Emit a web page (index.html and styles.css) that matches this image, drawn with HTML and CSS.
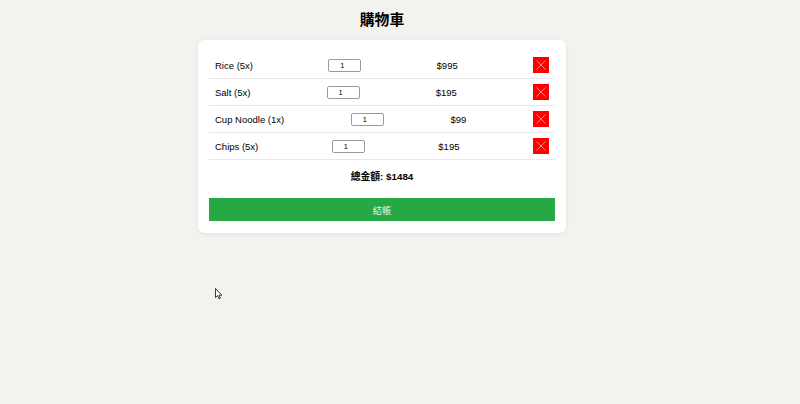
FILE: index.html
```html
<!DOCTYPE html>
<html lang="zh-Hant">
<head>
<meta charset="utf-8">
<title>購物車</title>
<link rel="stylesheet" href="styles.css">
</head>
<body>
<div class="page">
  <h1 class="title">購物車</h1>
  <div class="card">
    <div class="row">
      <span class="name">Rice (5x)</span>
      <input class="qty" type="text" value="1">
      <span class="price">$995</span>
      <button class="remove" aria-label="remove"><svg viewBox="0 0 16 16" width="16" height="16"><path d="M3.5 3.5 L12.5 12.5 M12.5 3.5 L3.5 12.5" stroke="#ff9a9a" stroke-width="0.9" fill="none"/></svg></button>
    </div>
    <div class="row">
      <span class="name">Salt (5x)</span>
      <input class="qty" type="text" value="1">
      <span class="price">$195</span>
      <button class="remove" aria-label="remove"><svg viewBox="0 0 16 16" width="16" height="16"><path d="M3.5 3.5 L12.5 12.5 M12.5 3.5 L3.5 12.5" stroke="#ff9a9a" stroke-width="0.9" fill="none"/></svg></button>
    </div>
    <div class="row">
      <span class="name">Cup Noodle (1x)</span>
      <input class="qty" type="text" value="1">
      <span class="price">$99</span>
      <button class="remove" aria-label="remove"><svg viewBox="0 0 16 16" width="16" height="16"><path d="M3.5 3.5 L12.5 12.5 M12.5 3.5 L3.5 12.5" stroke="#ff9a9a" stroke-width="0.9" fill="none"/></svg></button>
    </div>
    <div class="row">
      <span class="name">Chips (5x)</span>
      <input class="qty" type="text" value="1">
      <span class="price">$195</span>
      <button class="remove" aria-label="remove"><svg viewBox="0 0 16 16" width="16" height="16"><path d="M3.5 3.5 L12.5 12.5 M12.5 3.5 L3.5 12.5" stroke="#ff9a9a" stroke-width="0.9" fill="none"/></svg></button>
    </div>
    <div class="total">總金額: $1484</div>
    <button class="checkout">結帳</button>
  </div>
</div>
<svg class="cursor" viewBox="0 0 8 12" width="8" height="12"><path d="M0.5 0.5 L0.5 9.5 L2.6 7.6 L4 10.8 L5.3 10.2 L4 7.2 L6.8 7.2 Z" fill="#fff" stroke="#222" stroke-width="0.9" stroke-linejoin="round"/></svg>
</body>
</html>
```
FILE: styles.css
```css
html, body {
  margin: 0;
  padding: 0;
  background: #f2f2ef;
}
body {
  font-family: "Liberation Sans", Arial, "Noto Sans CJK TC", sans-serif;
  color: #111;
  position: relative;
  height: 404px;
  overflow: hidden;
}
.page {
  width: 764px;
  display: flex;
  flex-direction: column;
  align-items: center;
}
.title {
  margin: 0;
  height: 40px;
  line-height: 38px;
  font-size: 14.8px;
  font-weight: bold;
  font-family: "Noto Sans CJK TC", "Liberation Sans", sans-serif;
  color: #000;
}
.card {
  width: 346px;
  background: #fff;
  border-radius: 6px;
  padding: 12px 11px 12px;
  box-shadow: 0 1px 4px rgba(0,0,0,0.08);
}
.row {
  display: flex;
  justify-content: space-between;
  align-items: center;
  height: 26px;
  padding: 0 6px;
  border-bottom: 1px solid #e8e8e8;
  font-size: 9.5px;
}
.name, .price {
  color: #000;
}
.qty {
  box-sizing: border-box;
  width: 33px;
  height: 13px;
  margin: 0;
  padding: 0 0 0 11px;
  border: 1px solid #9a9a9a;
  border-radius: 2px;
  font-size: 7.5px;
  font-family: "Liberation Sans", Arial, sans-serif;
  color: #000;
  background: #fff;
}
.remove {
  width: 16px;
  height: 16px;
  padding: 0;
  margin: 0;
  border: none;
  background: #ff0000;
  display: flex;
  align-items: center;
  justify-content: center;
}
.remove svg {
  display: block;
}
.total {
  text-align: center;
  font-weight: bold;
  font-size: 9.8px;
  line-height: 12px;
  margin: 11px 0 15px;
  color: #000;
  font-family: "Liberation Sans", "Noto Sans CJK TC", sans-serif;
}
.checkout {
  display: block;
  width: 100%;
  height: 23px;
  border: none;
  margin: 0;
  padding: 0;
  background: #28a745;
  color: #e8f5ea;
  font-size: 9.2px;
  font-family: "Noto Sans CJK TC", "Liberation Sans", sans-serif;
}
.cursor {
  position: absolute;
  left: 215px;
  top: 288px;
}
```
